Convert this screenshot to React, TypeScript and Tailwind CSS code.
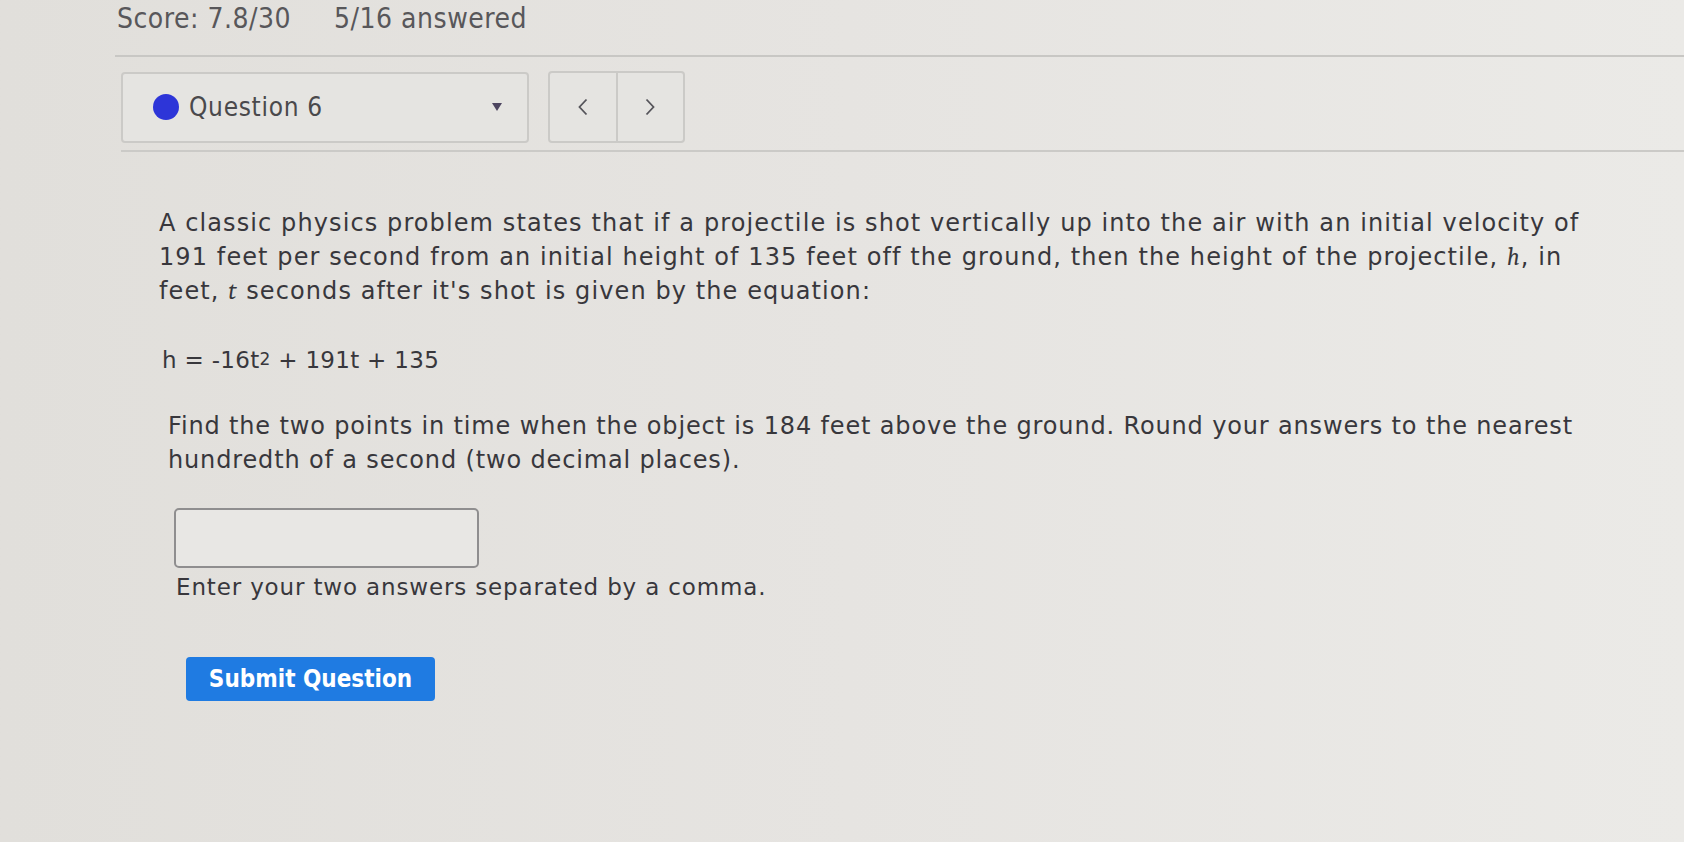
import React, { useState } from 'react';

const App: React.FC = () => {
  const [answer, setAnswer] = useState('');

  return (
    <div
      className="min-h-screen w-full overflow-hidden bg-gradient-to-r from-[#e1dfdb] via-[#e6e4e1] to-[#ebeae7] text-[#3b3a3c]"
      style={{ fontFamily: '"DejaVu Sans Condensed", "DejaVu Sans", sans-serif' }}
    >
      {/* score header */}
      <div className="flex items-center gap-[43px] pl-[117px] h-[38px] text-[28px] tracking-[0.5px] text-[#58575a]">
        <span>Score: 7.8/30</span>
        <span>5/16 answered</span>
      </div>
      <div className="ml-[115px] mt-[17px] border-t-2 border-[#c8c7c4]" />

      {/* question selector */}
      <div className="flex items-center gap-[19px] ml-[121px] mt-[14px]">
        <button className="flex items-center w-[408px] h-[71px] rounded-[4px] border-2 border-[#cbcac7] bg-[#e5e4e1] pl-[30px] pr-[25px]">
          <span className="w-[26px] h-[26px] rounded-full bg-[#2d35d8]" />
          <span className="ml-[10px] text-[26px] tracking-[0.7px] text-[#4a494c]">Question 6</span>
          <span className="ml-auto w-0 h-0 border-l-[5px] border-r-[5px] border-t-[8px] border-l-transparent border-r-transparent border-t-[#4d4560]" />
        </button>
        <div className="flex w-[137px] h-[72px] rounded-[4px] border-2 border-[#cbcac7] bg-[#e5e4e1]">
          <button className="flex-1 flex items-center justify-center border-r-2 border-[#cbcac7]">
            <svg width="10" height="18" viewBox="0 0 10 18" fill="none" stroke="#55545a" strokeWidth="1.8">
              <path d="M8.5 1.5 L1.5 9 L8.5 16.5" />
            </svg>
          </button>
          <button className="flex-1 flex items-center justify-center">
            <svg width="10" height="18" viewBox="0 0 10 18" fill="none" stroke="#55545a" strokeWidth="1.8">
              <path d="M1.5 1.5 L8.5 9 L1.5 16.5" />
            </svg>
          </button>
        </div>
      </div>
      <div className="ml-[121px] mt-[7px] border-t-2 border-[#cbcac7]" />

      {/* question body */}
      <div className="leading-[34px] text-[#38373c]" style={{ fontFamily: '"DejaVu Sans", sans-serif' }}>
        <p className="ml-[159px] mt-[54px] whitespace-nowrap text-[24px] tracking-[1.1px]">
          A classic physics problem states that if a projectile is shot vertically up into the air with an initial velocity of
          <br />
          191 feet per second from an initial height of 135 feet off the ground, then the height of the projectile, <i className="font-serif">h</i>, in
          <br />
          feet, <i className="font-serif">t</i> seconds after it's shot is given by the equation:
        </p>

        <p className="ml-[162px] mt-[35px] whitespace-nowrap text-[23px] tracking-[0.3px]">
          h = -16t<sup className="text-[17px] relative -top-[3px]">2</sup> + 191t + 135
        </p>

        <p className="ml-[168px] mt-[32px] whitespace-nowrap text-[24px] tracking-[0.85px]">
          Find the two points in time when the object is 184 feet above the ground. Round your answers to the nearest
          <br />
          hundredth of a second (two decimal places).
        </p>

        <input
          value={answer}
          onChange={(e) => setAnswer(e.target.value)}
          className="block ml-[174px] mt-[31px] w-[305px] h-[60px] rounded-[5px] border-2 border-[#8f8e8f] bg-[#e8e7e4] px-3 text-[22px] outline-none"
        />

        <p className="ml-[176px] mt-[2px] whitespace-nowrap text-[23px] tracking-[0.85px]">Enter your two answers separated by a comma.</p>

        <button
          className="block ml-[186px] mt-[53px] w-[249px] h-[44px] rounded-[4px] bg-[#1f7be2] text-white text-[24px] font-semibold"
          style={{ fontFamily: '"DejaVu Sans Condensed", "DejaVu Sans", sans-serif' }}
        >
          Submit Question
        </button>
      </div>
    </div>
  );
};

export default App;
